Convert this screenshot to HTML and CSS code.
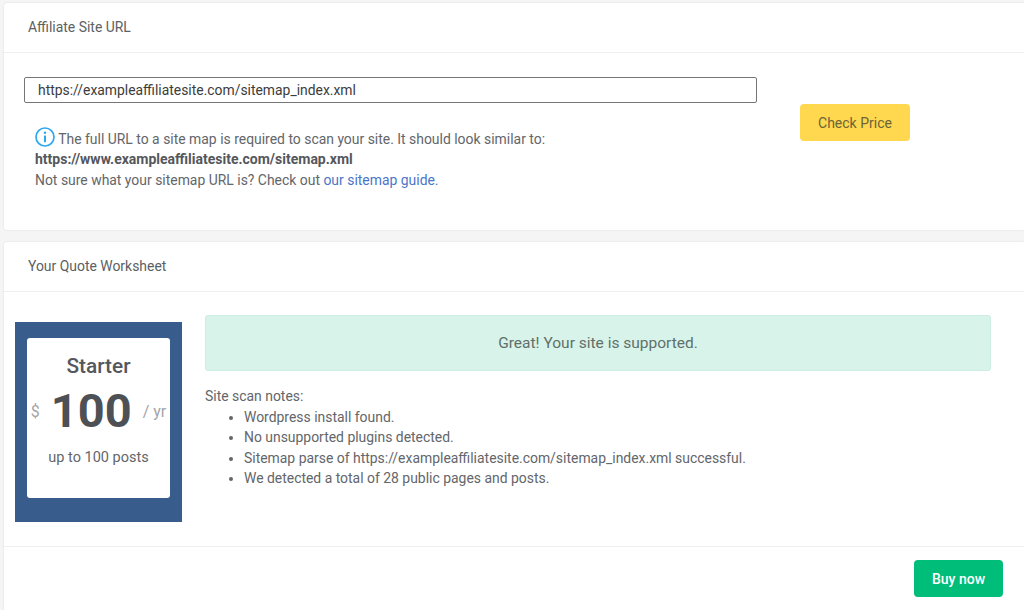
FILE: index.html
```html
<!DOCTYPE html>
<html lang="en">
<head>
    <meta charset="UTF-8">
    <title>Affiliate Site Quote</title>
    <link rel="stylesheet" href="styles.css">
</head>
<body>
    <section class="card url-card">
        <div class="card-header">Affiliate Site URL</div>
        <div class="url-body">
            <div class="url-main">
                <input class="url-input" type="text" value="https://exampleaffiliatesite.com/sitemap_index.xml">
                <div class="url-help">
                    <svg class="info-icon" width="20" height="20" viewBox="0 0 20 20">
                        <circle cx="10" cy="10" r="9" fill="none" stroke="#2ea7f2" stroke-width="1.7"/>
                        <circle cx="10" cy="5.8" r="1.2" fill="#2ea7f2"/>
                        <rect x="9" y="8.4" width="2" height="6.8" rx="0.5" fill="#2ea7f2"/>
                    </svg>
                    The full URL to a site map is required to scan your site. It should look similar to:<br>
                    <strong>https://www.exampleaffiliatesite.com/sitemap.xml</strong><br>
                    Not sure what your sitemap URL is? Check out <a href="#">our sitemap guide.</a>
                </div>
            </div>
            <button class="btn btn-yellow">Check Price</button>
        </div>
    </section>

    <section class="card quote-card">
        <div class="card-header">Your Quote Worksheet</div>
        <div class="quote-body">
            <div class="plan">
                <div class="plan-inner">
                    <div class="plan-name">Starter</div>
                    <div class="plan-price">
                        <span class="plan-unit">$</span>
                        <span class="plan-amount">100</span>
                        <span class="plan-unit">/ yr</span>
                    </div>
                    <div class="plan-posts">up to 100 posts</div>
                </div>
            </div>
            <div class="quote-main">
                <div class="alert">Great! Your site is supported.</div>
                <div class="notes">
                    Site scan notes:
                    <ul>
                        <li>Wordpress install found.</li>
                        <li>No unsupported plugins detected.</li>
                        <li>Sitemap parse of https://exampleaffiliatesite.com/sitemap_index.xml successful.</li>
                        <li>We detected a total of 28 public pages and posts.</li>
                    </ul>
                </div>
            </div>
        </div>
        <div class="card-footer">
            <button class="btn btn-green">Buy now</button>
        </div>
    </section>
</body>
</html>
```

FILE: styles.css
```css
html, body {
    margin: 0; padding: 0; height: 100%; overflow: hidden;
}
body {
    background: #f5f5f5; color: #63666a;
    font-family: 'Roboto', 'Liberation Sans', sans-serif; font-size: 13.93px; line-height: 20.4px;
    padding: 3px 0 0 4px; box-sizing: border-box;
}
.card {
    background: white; border-radius: 3px 0 0 3px;
    box-shadow: 0 0 2px rgba(0, 0, 0, 0.12);
}
.url-card {
    height: 227px; margin-bottom: 12px;
}
.card-header {
    height: 50px; box-sizing: border-box; padding: 14px 24px 0;
    border-bottom: 1px solid #efefef; color: #5c5f63;
}
.url-body {
    display: flex; padding: 24px 0 0 20px;
}
.url-main {
    width: 733px;
}
.url-input {
    display: block; width: 100%; height: 26px; box-sizing: border-box;
    border: 1px solid #767676; border-radius: 2px; padding: 0 13px;
    font-family: inherit; font-size: 13.9px; color: #3c3c3c; outline: none;
}
.url-help {
    padding: 24px 0 0 11px;
}
.url-help strong {
    font-weight: 700; font-size: 14px; color: #54575b;
}
.url-help a {
    color: #4a76c9; text-decoration: none;
}
.info-icon {
    vertical-align: -3px;
}
.btn {
    border: none; border-radius: 4px; font-family: inherit; font-size: 14px; cursor: pointer;
}
.btn-yellow {
    width: 110px; height: 37px; margin: 27px 0 0 43px;
    background: #ffd84f; color: #6b6436;
}
.btn-green {
    width: 89px; height: 37px;
    background: #00bd7a; color: white; font-weight: 500;
}
.quote-body {
    display: flex; align-items: flex-start; padding: 23px 0 0 11px; height: 254px; box-sizing: border-box;
}
.plan {
    width: 167px; height: 200px; margin-top: 7px; padding: 16px 12px 0; box-sizing: border-box;
    background: #385c8c; flex-shrink: 0;
}
.plan-inner {
    height: 160px; box-sizing: border-box; padding-top: 16px;
    background: white; border-radius: 3px; text-align: center;
}
.plan-name {
    font-size: 20.8px; font-weight: 500; line-height: 24px; color: #54575b;
}
.plan-price {
    display: flex; justify-content: center; align-items: center; gap: 11px; margin: 10px -10px 0;
    height: 46px;
}
.plan-amount {
    font-size: 47px; font-weight: 700; line-height: 46px; color: #4d5054;
}
.plan-unit {
    font-size: 16px; color: #a3a5a8; margin-top: 3px;
}
.plan-posts {
    margin-top: 14px; font-size: 14.5px;
}
.quote-main {
    width: 786px; margin-left: 23px;
}
.alert {
    height: 56px; box-sizing: border-box; border: 1px solid #cdeee0; border-radius: 3px;
    background: #d8f3e9; text-align: center; font-size: 15.5px; line-height: 54px; color: #60706a;
}
.notes {
    margin-top: 15.4px;
}
.notes ul {
    margin: 0; padding-left: 39px;
}
.card-footer {
    border-top: 1px solid #efefef; padding: 13px 21px 20px 0; display: flex; justify-content: flex-end;
}
```
